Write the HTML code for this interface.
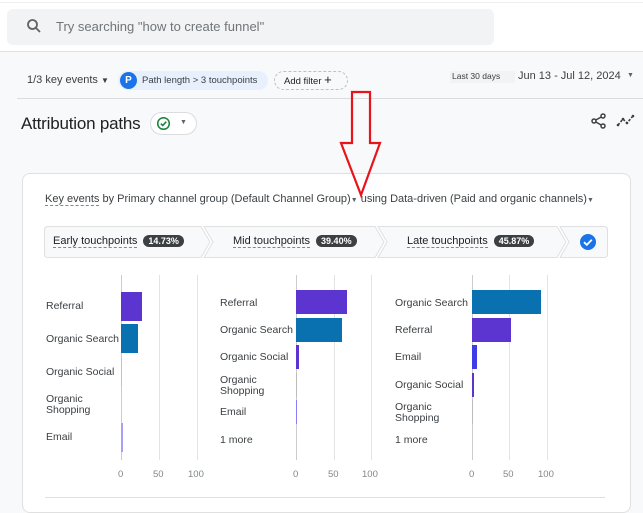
<!DOCTYPE html>
<html><head><style>
*{margin:0;padding:0;box-sizing:border-box}
body{width:643px;height:500px;overflow:hidden;background:#f8f9fa;font-family:"Liberation Sans",Arial,sans-serif;color:#202124;position:relative}
.a{position:absolute;white-space:nowrap}
.lbl{position:absolute;font-size:10.5px;color:#3c4043;line-height:11px}
.ax{position:absolute;font-size:9.5px;color:#80868b}
.grid{position:absolute;width:1px;background:#e3e3e3;top:275px;height:185px}
.bar{position:absolute}
.dash{border-bottom:1px dashed #80868b}
.pill{background:#3c4043;color:#fff;font-size:9px;font-weight:bold;border-radius:8px;padding:1px 5px;margin-left:6px}
</style></head><body>
<div class="a" style="left:0;top:0;width:643px;height:52px;background:#fff;border-bottom:1px solid #e0e0e0"></div>
<div class="a" style="left:0;top:2px;width:643px;height:1px;background:#eee"></div>
<div class="a" style="left:7px;top:9px;width:487px;height:36px;background:#f1f3f4;border-radius:6px"></div>
<svg class="a" style="left:26px;top:18px" width="16" height="16" viewBox="0 0 16 16"><circle cx="6.5" cy="6.5" r="4.5" fill="none" stroke="#5f6368" stroke-width="1.8"/><line x1="10" y1="10" x2="14" y2="14" stroke="#5f6368" stroke-width="1.8"/></svg>
<div class="a" style="left:56px;top:19px;font-size:13px;color:#70757a">Try searching "how to create funnel"</div>

<div class="a" style="left:27px;top:74px;font-size:11px;color:#3c4043">1/3 key events <span style="font-size:8px">▼</span></div>
<div class="a" style="left:118px;top:71px;width:150px;height:19px;background:#e8f0fe;border-radius:10px"></div>
<div class="a" style="left:120px;top:72px;width:17px;height:17px;border-radius:50%;background:#1a73e8;color:#fff;font-size:10px;font-weight:bold;text-align:center;line-height:17px">P</div>
<div class="a" style="left:142px;top:75px;font-size:9.5px;color:#3c4043">Path length &gt; 3 touchpoints</div>
<div class="a" style="left:274px;top:71px;width:74px;height:19px;border:1px dashed #bdc1c6;border-radius:10px;font-size:9.5px;padding:3px 0 0 9px;color:#202124">Add filter <span style="font-size:13px;line-height:9px">+</span></div>
<div class="a" style="left:450px;top:71px;width:65px;height:12px;background:#f1f3f4;font-size:8.5px;color:#3c4043;padding:0 2px">Last 30 days</div>
<div class="a" style="left:518px;top:70px;font-size:11px;color:#3c4043">Jun 13 - Jul 12, 2024</div>
<div class="a" style="left:627px;top:72px;font-size:7px;color:#5f6368">▼</div>
<div class="a" style="left:17px;top:98px;width:626px;height:1px;background:#dadce0"></div>

<div class="a" style="left:21px;top:114px;font-size:17px;letter-spacing:-0.2px;color:#202124">Attribution paths</div>
<div class="a" style="left:150px;top:112px;width:47px;height:23px;border:1px solid #dadce0;border-radius:12px;background:#fff"></div>
<svg class="a" style="left:156px;top:116px" width="15" height="15" viewBox="0 0 15 15"><circle cx="7.5" cy="7.5" r="5.8" fill="none" stroke="#188038" stroke-width="1.5"/><path d="M4.8 7.6l1.9 1.9 3.6-3.8" fill="none" stroke="#188038" stroke-width="1.5"/></svg>
<div class="a" style="left:180px;top:119px;font-size:7px;color:#5f6368">▼</div>
<svg class="a" style="left:590px;top:112px" width="18" height="18" viewBox="0 0 18 18"><circle cx="13" cy="4" r="2" fill="none" stroke="#3c4043" stroke-width="1.5"/><circle cx="4" cy="9" r="2" fill="none" stroke="#3c4043" stroke-width="1.5"/><circle cx="13" cy="14" r="2" fill="none" stroke="#3c4043" stroke-width="1.5"/><path d="M5.8 8l5.4-3M5.8 10l5.4 3" stroke="#3c4043" stroke-width="1.5"/></svg>
<svg class="a" style="left:616px;top:112px" width="20" height="18" viewBox="0 0 20 18"><path d="M2 13l5-6 4 4 6-7" fill="none" stroke="#3c4043" stroke-width="1.6" stroke-dasharray="2.5 1.5"/><circle cx="2" cy="13" r="1.3" fill="#3c4043"/><circle cx="7" cy="7" r="1.3" fill="#3c4043"/><circle cx="11" cy="11" r="1.3" fill="#3c4043"/><circle cx="17" cy="4" r="1.3" fill="#3c4043"/></svg>

<div class="a" style="left:22px;top:173px;width:609px;height:340px;background:#fff;border:1px solid #e0e0e0;border-radius:8px"></div>
<div class="a" style="left:45px;top:193px;font-size:11px;color:#3c4043"><span class="dash">Key events</span> by Primary channel group (Default Channel Group)<span style="font-size:7px;color:#5f6368">▼</span> using Data-driven (Paid and organic channels)<span style="font-size:7px;color:#5f6368">▼</span></div>

<svg class="a" style="left:44px;top:226px" width="564" height="32" viewBox="0 0 564 32">
<g fill="#f8f9fa" stroke="#e0e0e0" stroke-width="1">
<path d="M4 0.5H157L166 16 157 31.5H4Q0.5 31.5 0.5 28V4Q0.5 0.5 4 0.5Z"/>
<path d="M160 0.5H331L340 16 331 31.5H160L169 16Z"/>
<path d="M334 0.5H513L522 16 513 31.5H334L343 16Z"/>
<path d="M516 0.5H560Q563.5 0.5 563.5 4V28Q563.5 31.5 560 31.5H516L525 16Z"/>
</g></svg>
<div class="a" style="left:53px;top:235px;font-size:11px;color:#202124"><span class="dash">Early touchpoints</span><span class="pill">14.73%</span></div>
<div class="a" style="left:233px;top:235px;font-size:11px;color:#202124"><span class="dash">Mid touchpoints</span><span class="pill">39.40%</span></div>
<div class="a" style="left:407px;top:235px;font-size:11px;color:#202124"><span class="dash">Late touchpoints</span><span class="pill">45.87%</span></div>
<svg class="a" style="left:579px;top:233px" width="18" height="18" viewBox="0 0 18 18"><circle cx="9" cy="9" r="8" fill="#1a73e8"/><path d="M5 9.2l2.8 2.7 5-5.2" fill="none" stroke="#fff" stroke-width="1.8"/></svg>

<!-- chart 1 -->
<div class="grid" style="left:121px;background:#ccc"></div><div class="grid" style="left:159px"></div><div class="grid" style="left:197px"></div>
<div class="ax" style="left:118px;top:469px">0</div><div class="ax" style="left:153px;top:469px">50</div><div class="ax" style="left:188px;top:469px">100</div>
<div class="lbl" style="left:46px;top:301px">Referral</div>
<div class="lbl" style="left:46px;top:334px">Organic Search</div>
<div class="lbl" style="left:46px;top:367px">Organic Social</div>
<div class="lbl" style="left:46px;top:394px">Organic<br>Shopping</div>
<div class="lbl" style="left:46px;top:432px">Email</div>
<div class="bar" style="left:121px;top:292px;width:21px;height:29px;background:#5c35d0"></div>
<div class="bar" style="left:121px;top:324px;width:17px;height:29px;background:#0a71b0"></div>
<div class="bar" style="left:121px;top:357px;width:1px;height:29px;background:#c9b6f0"></div>
<div class="bar" style="left:121px;top:390px;width:1px;height:29px;background:#ccc"></div>
<div class="bar" style="left:121px;top:423px;width:2px;height:29px;background:#a8a0f8"></div>

<!-- chart 2 -->
<div class="grid" style="left:296px;background:#ccc"></div><div class="grid" style="left:334px"></div><div class="grid" style="left:371px"></div>
<div class="ax" style="left:293px;top:469px">0</div><div class="ax" style="left:328px;top:469px">50</div><div class="ax" style="left:362px;top:469px">100</div>
<div class="lbl" style="left:220px;top:298px">Referral</div>
<div class="lbl" style="left:220px;top:325px">Organic Search</div>
<div class="lbl" style="left:220px;top:352px">Organic Social</div>
<div class="lbl" style="left:220px;top:375px">Organic<br>Shopping</div>
<div class="lbl" style="left:220px;top:407px">Email</div>
<div class="lbl" style="left:220px;top:435px">1 more</div>
<div class="bar" style="left:296px;top:290px;width:51px;height:24px;background:#5c35d0"></div>
<div class="bar" style="left:296px;top:318px;width:46px;height:24px;background:#0a71b0"></div>
<div class="bar" style="left:296px;top:345px;width:3px;height:24px;background:#5c35d0"></div>
<div class="bar" style="left:296px;top:373px;width:1px;height:24px;background:#bbb"></div>
<div class="bar" style="left:296px;top:400px;width:1px;height:24px;background:#8b7cf8"></div>
<div class="bar" style="left:296px;top:428px;width:1px;height:24px;background:#ccc"></div>

<!-- chart 3 -->
<div class="grid" style="left:472px;background:#ccc"></div><div class="grid" style="left:509px"></div><div class="grid" style="left:547px"></div>
<div class="ax" style="left:469px;top:469px">0</div><div class="ax" style="left:503px;top:469px">50</div><div class="ax" style="left:538px;top:469px">100</div>
<div class="lbl" style="left:395px;top:298px">Organic Search</div>
<div class="lbl" style="left:395px;top:325px">Referral</div>
<div class="lbl" style="left:395px;top:352px">Email</div>
<div class="lbl" style="left:395px;top:380px">Organic Social</div>
<div class="lbl" style="left:395px;top:402px">Organic<br>Shopping</div>
<div class="lbl" style="left:395px;top:435px">1 more</div>
<div class="bar" style="left:472px;top:290px;width:69px;height:24px;background:#0a71b0"></div>
<div class="bar" style="left:472px;top:318px;width:39px;height:24px;background:#5c35d0"></div>
<div class="bar" style="left:472px;top:345px;width:5px;height:24px;background:#3d3de8"></div>
<div class="bar" style="left:472px;top:373px;width:2px;height:24px;background:#5c35d0"></div>
<div class="bar" style="left:472px;top:400px;width:1px;height:24px;background:#bbb"></div>
<div class="bar" style="left:472px;top:428px;width:1px;height:24px;background:#ccc"></div>
<div class="a" style="left:45px;top:497px;width:560px;height:1px;background:#e0e0e0"></div>

<svg class="a" style="left:0;top:0" width="643" height="500"><path d="M352 92H370V143H380L361 195 341 143H352Z" fill="none" stroke="#e8141c" stroke-width="2.2"/></svg>
</body></html>
